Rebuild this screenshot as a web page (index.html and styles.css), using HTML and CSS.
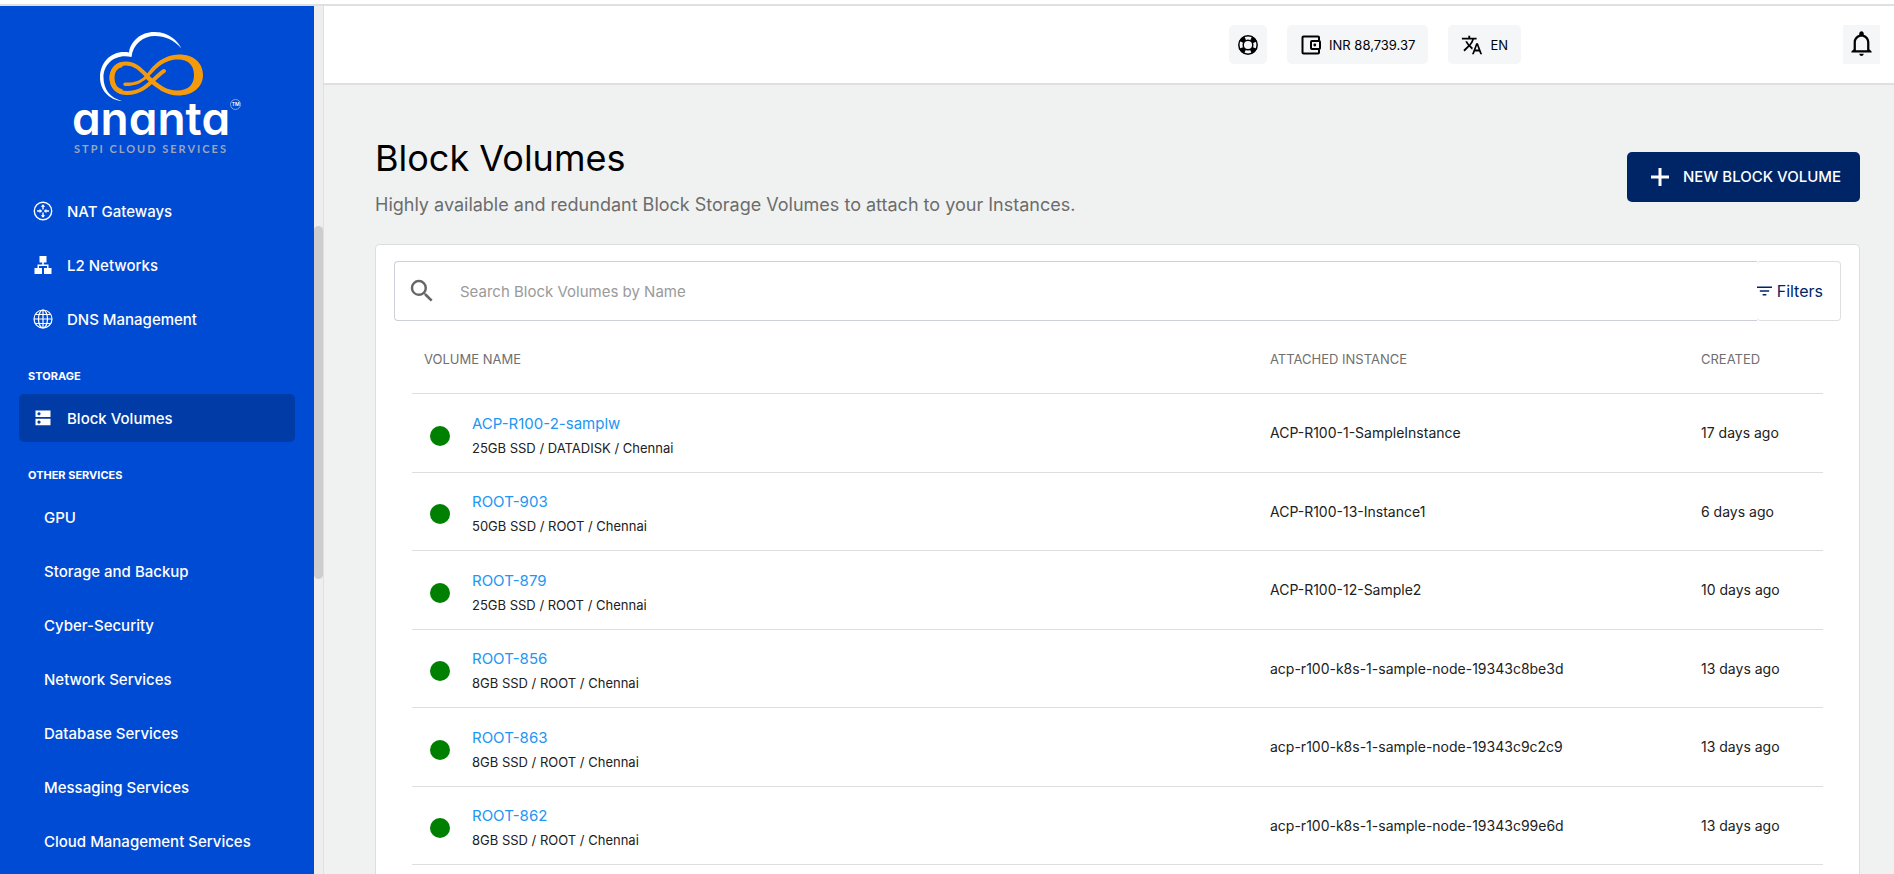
FILE: index.html
```html
<!DOCTYPE html>
<html lang="en">
<head>
<meta charset="utf-8">
<title>Block Volumes</title>
<link rel="stylesheet" href="styles.css">
</head>
<body>
<div class="app">
  <aside class="sidebar">
    <div class="brand">
      <svg class="brand-mark" viewBox="0 0 104 70" width="104" height="70" aria-hidden="true">
        <path fill="#fff" d="M81.500 16.500C74 2.500 62 0 54 0C41 0 30.500 9 29 20.500C13 17.500 0 29 0 45.500C0 58 9 68 22 69C10 66 3.500 57 3.500 45.500C3.500 32 15 21.500 31.500 25C33 12 43 4 55 4C65 4 74 8 81.500 16.500Z"/>
        <path fill="none" stroke="#f59a0a" stroke-width="4" stroke-linecap="round" d="M64 39C54 45 46 61 27 61C17 61 11.500 54 11.500 46C11.500 38 17 31.500 26 31.500C36 31.500 42 39 48 45"/>
        <path fill="none" stroke="#f59a0a" stroke-width="5" d="M22 60C15 58 12 52 12 46C12 40 15 34 22 32.500"/>
        <path fill="#f59a0a" d="M25 50.500C44 51.500 46 41 54 33.500C62 26 70 22.500 79 22.500C94 22.500 103 31 103 43C103 55 93 63.500 78 63.500C66 63.500 57 57 45 46L48 42.500C60 54 67 58.500 77 58.500C89 58.500 94 52 94 43C94 33 88 27.500 78 27.500C70 27.500 64 30 56 37C48 45 42 54.500 25 54A1.700 1.700 0 0 1 25 50.500Z"/>
      </svg>
      <div class="brand-name">ananta<span class="brand-tm">TM</span></div>
      <div class="brand-tag">STPI CLOUD SERVICES</div>
    </div>
    <nav class="nav">
      <a class="nav-item" href="#">
        <svg viewBox="0 0 20 20" width="20" height="20" fill="none" stroke="#fff" aria-hidden="true"><circle cx="10" cy="10" r="8.700" stroke-width="1.400"/><path stroke-width="1.400" d="M10 4v4.500M10 11.500v4.500M4 10h4.500M11.500 10h4.500"/><path fill="#fff" stroke="none" d="M10 3.200l2.200 2.600H7.800zM10 16.800l2.200-2.600H7.800zM9 10L6.600 7.800v4.400zM11 10L13.400 7.800v4.400z"/></svg>
        NAT Gateways</a>
      <a class="nav-item" href="#">
        <svg viewBox="0 0 20 20" width="20" height="20" fill="#fff" aria-hidden="true"><path d="M6.500 1h7v6.500h-2.700v2H15.500v3.500H18.500V19h-7.500v-6h3v-2H6v2h3v6H1.500v-6h3V9.500h4.700v-2H6.500z"/></svg>
        L2 Networks</a>
      <a class="nav-item" href="#">
        <svg viewBox="0 0 20 20" width="20" height="20" fill="none" stroke="#fff" stroke-width="1.200" aria-hidden="true"><circle cx="10" cy="10" r="9"/><ellipse cx="10" cy="10" rx="4.500" ry="9"/><path d="M10 1v18M1 10h18M2.500 5.500h15M2.500 14.500h15"/></svg>
        DNS Management</a>
      <h2 class="nav-heading">STORAGE</h2>
      <a class="nav-item nav-item-active" href="#" aria-current="page">
        <svg viewBox="0 0 20 20" width="20" height="20" fill="#fff" fill-rule="evenodd" aria-hidden="true"><path d="M2.500 2.500h15v6.500h-15zM6 4.200a1.600 1.600 0 1 0 .01 0zM2.500 10.800h15v6.500h-15zM6 12.500a1.600 1.600 0 1 0 .01 0z"/></svg>
        Block Volumes</a>
      <h2 class="nav-heading">OTHER SERVICES</h2>
      <a class="nav-item nav-item-plain" href="#">GPU</a>
      <a class="nav-item nav-item-plain" href="#">Storage and Backup</a>
      <a class="nav-item nav-item-plain" href="#">Cyber-Security</a>
      <a class="nav-item nav-item-plain" href="#">Network Services</a>
      <a class="nav-item nav-item-plain" href="#">Database Services</a>
      <a class="nav-item nav-item-plain" href="#">Messaging Services</a>
      <a class="nav-item nav-item-plain" href="#">Cloud Management Services</a>
    </nav>
  </aside>
  <div class="scroll-track" aria-hidden="true"><div class="scroll-thumb"></div></div>
  <div class="page">
    <header class="topbar">
      <div class="topbar-tools">
        <button class="chip chip-icon" type="button" aria-label="Support">
          <svg viewBox="0 0 22 22" width="22" height="22" fill="none" stroke="#000" aria-hidden="true"><circle cx="11" cy="11" r="9.200" stroke-width="1.500"/><circle cx="11" cy="11" r="4.800" stroke-width="1.500"/><circle cx="11" cy="11" r="7.200" stroke-width="4.500" stroke-dasharray="5.300 6.010" stroke-dashoffset="-3"/></svg>
        </button>
        <button class="chip" type="button">
          <svg viewBox="0 0 22 22" width="22" height="22" fill="none" stroke="#000" stroke-width="2" aria-hidden="true"><path d="M19 6.500V3.500a1 1 0 0 0-1-1H3.500a1 1 0 0 0-1 1v15a1 1 0 0 0 1 1H18a1 1 0 0 0 1-1v-3"/><rect x="11" y="7" width="9" height="8" rx="1"/><circle cx="14.800" cy="11" r="1.400" fill="#000" stroke="none"/></svg>
          INR 88,739.37</button>
        <button class="chip" type="button">
          <svg viewBox="0 0 24 24" width="22" height="22" fill="#000" aria-hidden="true"><path d="M12.870 15.070l-2.540-2.510.03-.03c1.740-1.940 2.980-4.170 3.710-6.530H17V4h-7V2H8v2H1v1.990h11.170C11.500 7.920 10.440 9.750 9 11.350 8.070 10.320 7.300 9.190 6.690 8h-2c.73 1.630 1.730 3.170 2.980 4.560l-5.090 5.020L4 19l5-5 3.110 3.110.76-2.040zM18.500 10h-2L12 22h2l1.120-3h4.750L21 22h2l-4.500-12zm-2.620 7l1.620-4.330L19.120 17h-3.240z"/></svg>
          EN</button>
      </div>
      <button class="bell" type="button" aria-label="Notifications">
        <svg viewBox="0 0 24 24" width="27" height="27" fill="#000" aria-hidden="true"><path d="M10 21h4c0 1.100-.9 2-2 2s-2-.9-2-2zm11-2v1H3v-1l2-2v-6c0-3.100 2.030-5.830 5-6.710V3c0-1.100.9-2 2-2s2 .9 2 2v1.290c2.970.88 5 3.610 5 6.710v6l2 2zm-4-8c0-2.760-2.240-5-5-5s-5 2.240-5 5v7h10v-7z"/></svg>
      </button>
    </header>
    <main class="content">
      <div class="page-head">
        <div>
          <h1 class="page-title">Block Volumes</h1>
          <p class="page-sub">Highly available and redundant Block Storage Volumes to attach to your Instances.</p>
        </div>
        <button class="new-button" type="button">
          <svg viewBox="0 0 18 18" width="18" height="18" stroke="#fff" stroke-width="3" aria-hidden="true"><path d="M9 0v18M0 9h18"/></svg>
          NEW BLOCK VOLUME</button>
      </div>
      <section class="card">
        <div class="search">
          <label class="search-field">
            <svg viewBox="0 0 24 24" width="30" height="30" fill="#666" aria-hidden="true"><path d="M15.500 14h-.79l-.28-.27A6.470 6.470 0 0 0 16 9.500 6.500 6.500 0 1 0 9.500 16c1.610 0 3.090-.59 4.230-1.570l.27.280v.79l5 4.990L20.490 19l-4.990-5zm-6 0C7.010 14 5 11.990 5 9.500S7.010 5 9.500 5 14 7.010 14 9.500 11.990 14 9.500 14z"/></svg>
            <input class="search-input" type="search" placeholder="Search Block Volumes by Name" aria-label="Search Block Volumes by Name">
          </label>
          <button class="filters" type="button">
            <svg viewBox="0 0 16 10" width="15" height="10" stroke="#002567" stroke-width="1.500" aria-hidden="true"><path d="M0 1h16M3 5h10M6 9h4"/></svg>
            Filters</button>
        </div>
        <table class="volumes">
          <thead><tr><th class="col-name">VOLUME NAME</th><th class="col-instance">ATTACHED INSTANCE</th><th class="col-created">CREATED</th></tr></thead>
          <tbody>
            <tr><td><div class="volume"><span class="dot"></span><div><a class="volume-link" href="#">ACP-R100-2-samplw</a><div class="volume-meta">25GB SSD / DATADISK / Chennai</div></div></div></td><td>ACP-R100-1-SampleInstance</td><td>17 days ago</td></tr>
            <tr><td><div class="volume"><span class="dot"></span><div><a class="volume-link" href="#">ROOT-903</a><div class="volume-meta">50GB SSD / ROOT / Chennai</div></div></div></td><td>ACP-R100-13-Instance1</td><td>6 days ago</td></tr>
            <tr><td><div class="volume"><span class="dot"></span><div><a class="volume-link" href="#">ROOT-879</a><div class="volume-meta">25GB SSD / ROOT / Chennai</div></div></div></td><td>ACP-R100-12-Sample2</td><td>10 days ago</td></tr>
            <tr><td><div class="volume"><span class="dot"></span><div><a class="volume-link" href="#">ROOT-856</a><div class="volume-meta">8GB SSD / ROOT / Chennai</div></div></div></td><td>acp-r100-k8s-1-sample-node-19343c8be3d</td><td>13 days ago</td></tr>
            <tr><td><div class="volume"><span class="dot"></span><div><a class="volume-link" href="#">ROOT-863</a><div class="volume-meta">8GB SSD / ROOT / Chennai</div></div></div></td><td>acp-r100-k8s-1-sample-node-19343c9c2c9</td><td>13 days ago</td></tr>
            <tr><td><div class="volume"><span class="dot"></span><div><a class="volume-link" href="#">ROOT-862</a><div class="volume-meta">8GB SSD / ROOT / Chennai</div></div></div></td><td>acp-r100-k8s-1-sample-node-19343c99e6d</td><td>13 days ago</td></tr>
          </tbody>
        </table>
      </section>
    </main>
  </div>
</div>
</body>
</html>
```
FILE: styles.css
```css
* {
  box-sizing: border-box;
}

body {
  margin: 0;
  padding-top: 4px;
  height: 100vh;
  overflow: hidden;
  background: #fff;
  color: #212121;
  font-family: Inter, "Liberation Sans", sans-serif;
  font-size: 14px;
}

button,
input {
  font: inherit;
  border: 0;
}

a {
  text-decoration: none;
}

svg {
  flex: none;
}

.app {
  display: flex;
  height: 100%;
  border-top: 2px solid #e0e0e0;
}

.sidebar {
  flex: none;
  width: 314px;
  background: #004bd3;
  color: #fff;
  overflow: hidden;
}

.brand {
  display: flex;
  flex-direction: column;
  align-items: center;
  padding: 26px 12px 0 0;
  height: 181px;
}

.brand-mark {
  margin-left: 2px;
}

.brand-name {
  position: relative;
  margin-top: -7px;
  font-size: 46px;
  line-height: 46px;
  font-weight: 600;
  font-feature-settings: "cv11";
}

.brand-tm {
  position: absolute;
  top: 4px;
  left: 100%;
  width: 11px;
  height: 11px;
  border: 1px solid #7fa3e8;
  border-radius: 50%;
  font-size: 5px;
  line-height: 9px;
  text-align: center;
}

.brand-tag {
  font-family: Lato, sans-serif;
  font-size: 11px;
  line-height: 16px;
  font-weight: 700;
  letter-spacing: 2px;
  color: #9ba6bd;
}

.nav {
  display: flex;
  flex-direction: column;
  gap: 6px;
  padding: 0 19px;
}

.nav-item {
  display: flex;
  align-items: center;
  gap: 14px;
  height: 48px;
  padding-left: 14px;
  border-radius: 5px;
  color: #fff;
  font-size: 15px;
  font-weight: 500;
}

.nav-item-active {
  background: #003ba6;
}

.nav-item-plain {
  padding-left: 25px;
}

.nav-heading {
  margin: 0;
  padding: 19px 9px 4px;
  font-size: 11px;
  line-height: 16px;
  font-weight: 700;
}

.scroll-track {
  flex: none;
  width: 10px;
  padding-top: 220px;
  background: #eee;
  border-right: 1px solid #e0e0e0;
}

.scroll-thumb {
  height: 353px;
  border-radius: 5px;
  background: #cdcdcd;
}

.page {
  flex: 1;
  min-width: 0;
  display: flex;
  flex-direction: column;
  overflow: hidden;
  background: #f0f2f1;
}

.topbar {
  flex: none;
  display: flex;
  align-items: center;
  justify-content: flex-end;
  height: 79px;
  padding-right: 14px;
  background: #fff;
  border-bottom: 2px solid #e0e0e0;
}

.topbar-tools {
  display: flex;
  gap: 20px;
  margin-right: 322px;
}

.chip,
.bell {
  display: flex;
  align-items: center;
  gap: 7px;
  height: 39px;
  padding: 0 13px;
  border-radius: 5px;
  background: #f5f6f8;
  color: #000;
  font-size: 13px;
}

.chip-icon {
  padding: 0 8px;
}

.bell {
  padding: 0 5px 3px;
  border-radius: 0;
}

.content {
  flex: 1;
  display: flex;
  flex-direction: column;
  padding: 51px 34px 0 51px;
}

.page-head {
  display: flex;
  justify-content: space-between;
  align-items: center;
}

.page-title {
  margin: 0;
  font-size: 36px;
  line-height: 44px;
  font-weight: 400;
  color: #000;
}

.page-sub {
  margin: 13px 0 0;
  font-size: 18px;
  line-height: 24px;
  color: #6c6c6c;
}

.new-button {
  display: flex;
  align-items: center;
  gap: 14px;
  height: 50px;
  padding: 0 19px 0 24px;
  border-radius: 5px;
  background: #002567;
  color: #fff;
  font-size: 15px;
  font-weight: 500;
}

.card {
  flex: 1;
  margin-top: 27px;
  padding: 16px 18px 0;
  background: #fff;
  border: 1px solid #dcdfde;
  border-bottom: 0;
  border-radius: 5px 5px 0 0;
}

.search {
  display: flex;
  height: 60px;
}

.search-field {
  flex: 1;
  display: flex;
  align-items: center;
  gap: 23px;
  padding-left: 12px;
  border: 1px solid #cdd0d8;
  border-right: 0;
  border-radius: 4px 0 0 4px;
}

.search-input {
  flex: 1;
  height: 40px;
  padding: 0;
  outline: 0;
  background: none;
  font-size: 15px;
}

.search-input::placeholder {
  color: #9a9a9a;
}

.filters {
  display: flex;
  align-items: center;
  gap: 5px;
  padding: 0 17px 0 0;
  border: 1px solid #dfdfdf;
  border-left: 0;
  border-radius: 4px;
  background: none;
  color: #002567;
  font-size: 16px;
}

.volumes {
  width: calc(100% - 36px);
  margin-left: 18px;
  border-collapse: collapse;
  table-layout: fixed;
}

.volumes th {
  height: 72px;
  padding: 5px 12px 0;
  font-size: 13px;
  font-weight: 400;
  color: #6f6f6f;
  text-align: left;
  border-bottom: 1px solid #dedede;
}

.volumes td {
  height: 79px;
  padding: 0 12px;
  border-bottom: 1px solid #dedede;
}

.volumes tr:nth-child(even) td {
  height: 78px;
}

.col-instance {
  width: 431px;
}

.col-created {
  width: 134px;
}

.volume {
  display: flex;
  align-items: center;
  gap: 22px;
  padding: 6px 0 0 6px;
}

.dot {
  width: 20px;
  height: 20px;
  border-radius: 50%;
  background: #008000;
}

.volume-link {
  font-size: 15px;
  line-height: 24px;
  color: #2196f3;
}

.volume-meta {
  font-size: 13px;
  line-height: 24px;
}
```
